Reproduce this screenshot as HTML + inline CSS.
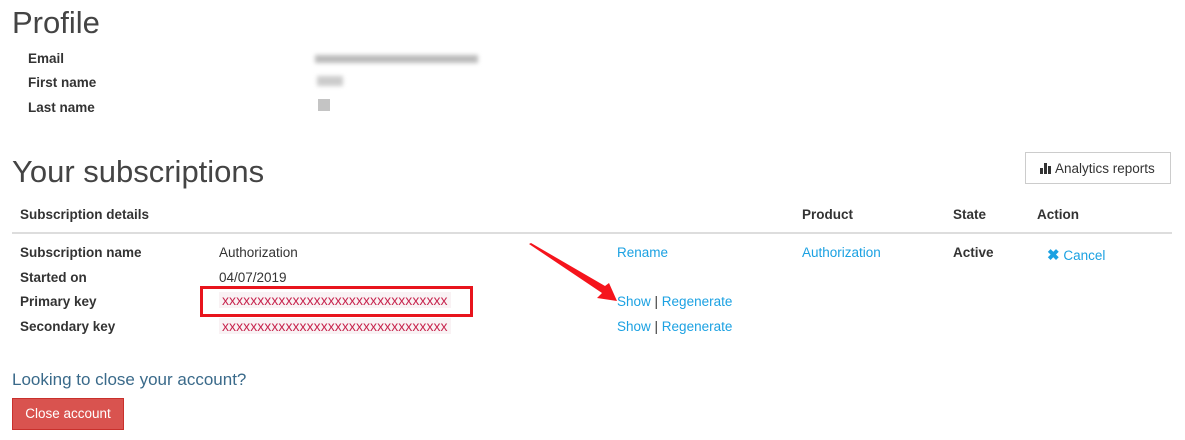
<!DOCTYPE html>
<html><head><meta charset="utf-8"><style>
body{margin:0;width:1185px;height:440px;background:#fff;font-family:"Liberation Sans",sans-serif;color:#333;position:relative;overflow:hidden}
.a{position:absolute;white-space:nowrap}
h1{position:absolute;margin:0;font-weight:300;font-size:31px;color:#444;left:12px}
.b{font-weight:bold;font-size:13.5px;color:#333}
.t{font-size:13.5px;color:#333}
.l{font-size:13.5px;color:#1ba1e2}
.k{background:#f9f2f4;color:#c7254e;font-size:14px;letter-spacing:0.05px;padding:0 3px}
.blur{background:#ccc;filter:blur(2px)}
</style></head><body>
<h1 style="top:5px">Profile</h1>
<div class="a b" style="left:28px;top:51px">Email</div>
<div class="a b" style="left:28px;top:75px">First name</div>
<div class="a b" style="left:28px;top:100px">Last name</div>
<div class="a blur" style="left:315px;top:55px;width:163px;height:8px;background:#bbb"></div>
<div class="a blur" style="left:317px;top:76px;width:26px;height:10px"></div>
<div class="a blur" style="left:318px;top:99px;width:12px;height:12px;filter:none;background:#c4c4c4"></div>

<h1 style="top:154px">Your subscriptions</h1>
<div class="a" style="left:1025px;top:152px;width:146px;height:32px;border:1px solid #ccc;box-sizing:border-box;font-size:13.5px;line-height:31px;padding-left:14px;color:#333">
<span style="display:inline-block;width:12px;height:11px;position:relative;vertical-align:-1px"><i style="position:absolute;left:0;bottom:0;width:3px;height:6px;background:#333"></i><i style="position:absolute;left:4px;bottom:0;width:3px;height:11px;background:#333"></i><i style="position:absolute;left:8px;bottom:0;width:3px;height:8px;background:#333"></i></span> Analytics reports</div>

<div class="a b" style="left:20px;top:207px">Subscription details</div>
<div class="a b" style="left:802px;top:207px">Product</div>
<div class="a b" style="left:953px;top:207px">State</div>
<div class="a b" style="left:1037px;top:207px">Action</div>
<div class="a" style="left:12px;top:232px;width:1160px;height:2px;background:#ddd"></div>

<div class="a b" style="left:20px;top:245px">Subscription name</div>
<div class="a b" style="left:20px;top:270px">Started on</div>
<div class="a b" style="left:20px;top:294px">Primary key</div>
<div class="a b" style="left:20px;top:319px">Secondary key</div>
<div class="a t" style="left:219px;top:245px">Authorization</div>
<div class="a t" style="left:219px;top:270px">04/07/2019</div>
<div class="a k" style="left:219px;top:292px">xxxxxxxxxxxxxxxxxxxxxxxxxxxxxxxx</div>
<div class="a k" style="left:219px;top:318px">xxxxxxxxxxxxxxxxxxxxxxxxxxxxxxxx</div>
<div class="a" style="left:200px;top:286px;width:273px;height:31px;border:3px solid #e8141c;box-sizing:border-box"></div>

<div class="a l" style="left:617px;top:245px">Rename</div>
<div class="a l" style="left:617px;top:294px">Show <span style="color:#333">|</span> Regenerate</div>
<div class="a l" style="left:617px;top:319px">Show <span style="color:#333">|</span> Regenerate</div>
<div class="a l" style="left:802px;top:245px">Authorization</div>
<div class="a b" style="left:953px;top:245px">Active</div>
<div class="a l" style="left:1047px;top:246px"><b style="font-size:15px">✖</b> Cancel</div>

<svg class="a" style="left:525px;top:240px" width="95" height="65"><polygon points="4,4 6,3 80,46 84,43 92,61 72,58 77,53" fill="#f5141c"/></svg>

<div class="a" style="left:12px;top:370px;font-size:17px;color:#3a6a8a;font-weight:300">Looking to close your account?</div>
<div class="a" style="left:12px;top:398px;width:112px;height:32px;background:#d9534f;border:1px solid #c9302c;box-sizing:border-box;color:#fff;font-size:13.5px;line-height:30px;text-align:center">Close account</div>
</body></html>
